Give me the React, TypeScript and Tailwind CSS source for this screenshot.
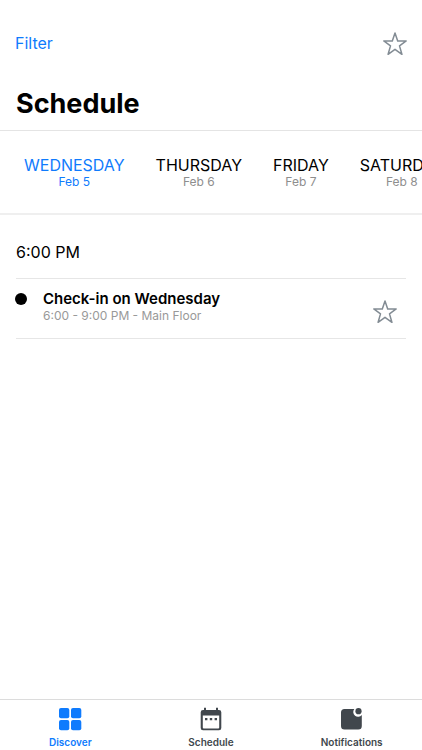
import { useState } from "react";

const days = [
  { name: "WEDNESDAY", date: "Feb 5" },
  { name: "THURSDAY", date: "Feb 6" },
  { name: "FRIDAY", date: "Feb 7" },
  { name: "SATURDAY", date: "Feb 8" },
];

function Star() {
  return (
    <svg viewBox="0 0 24 24" className="size-6" fill="none" stroke="#838c94" strokeWidth="1.5" strokeLinejoin="round" aria-hidden="true">
      <path d="M12 .9 14.700 8.900H23.200L16.500 13.900 18.900 22.300 12 17.300 5.100 22.300 7.500 13.900 .8 8.900H9.300Z" />
    </svg>
  );
}

function DiscoverIcon() {
  return (
    <svg viewBox="0 0 24 24" className="size-6" fill="currentColor" aria-hidden="true">
      <rect x="1" y="1" width="10.300" height="10.300" rx="2" />
      <rect x="13" y="1" width="10.300" height="10.300" rx="2" />
      <rect x="1" y="13" width="10.300" height="10.300" rx="2" />
      <rect x="13" y="13" width="10.300" height="10.300" rx="2" />
    </svg>
  );
}

function CalendarIcon() {
  return (
    <svg viewBox="0 0 24 24" className="size-6" fill="#41474d" aria-hidden="true">
      <path
        fillRule="evenodd"
        d="M5 .8h2v2.200h10V.8h2V3h1a2.300 2.300 0 0 1 2.300 2.300v15.700A2.300 2.300 0 0 1 20 23.300H4a2.300 2.300 0 0 1-2.300-2.300V5.300A2.300 2.300 0 0 1 4 3h1ZM3.800 8.400v12a1 1 0 0 0 1 1h14.400a1 1 0 0 0 1-1v-12Z"
      />
      <path d="M6 10.900h2.400v2.400H6zM10.800 10.900h2.400v2.400h-2.400zM15.600 10.900H18v2.400h-2.400z" />
    </svg>
  );
}

function NotificationIcon() {
  return (
    <svg viewBox="0 0 24 24" className="size-6" fill="#41474d" aria-hidden="true">
      <path d="M4.500 2h9.800A4.700 4.700 0 0 0 21.800 8v11a3.500 3.500 0 0 1-3.500 3.500H4.500A3.500 3.500 0 0 1 1 19V5.500A3.500 3.500 0 0 1 4.500 2Z" />
      <circle cx="18.500" cy="4.200" r="3.100" />
    </svg>
  );
}

const tabs = [
  { label: "Discover", Icon: DiscoverIcon },
  { label: "Schedule", Icon: CalendarIcon },
  { label: "Notifications", Icon: NotificationIcon },
];

export default function App() {
  const [day, setDay] = useState(0);
  const [tab, setTab] = useState(0);

  return (
    <div className="flex h-screen flex-col bg-white font-['Inter',sans-serif] text-black">
      <header className="border-b border-[#e4e4e4] pt-7 pb-[7px]">
        <div className="flex items-start justify-between px-[15px]">
          <button className="text-base leading-[30px] text-[#0f7bfd]">Filter</button>
          <button aria-label="Show favorites" className="flex h-8 items-center">
            <Star />
          </button>
        </div>
        <h1 className="mt-[25px] px-4 text-[27px] leading-[38px] font-bold">Schedule</h1>
      </header>

      <div className="flex gap-[31px] overflow-x-auto border-b-2 border-[#efefef] px-6 pt-6 pb-6 [scrollbar-width:none]">
        {days.map((d, i) => (
          <button key={d.name} onClick={() => setDay(i)} className={i === day ? "shrink-0 text-[#0f7bfd]" : "shrink-0"}>
            <span className="block text-base leading-5">{d.name}</span>
            <span className={i === day ? "block text-xs leading-[14px]" : "block text-xs leading-[14px] text-[#8e8e8e]"}>{d.date}</span>
          </button>
        ))}
      </div>

      <main className="flex-1 px-4 pt-6">
        <h2 className="h-[39px] text-base leading-[27px]">6:00 PM</h2>
        <ul>
          <li className="flex border-y border-[#e6e6e6] pt-2.5 pb-[14px]">
            <span className="mt-1 -ml-px size-3 shrink-0 rounded-full bg-black" />
            <div className="ml-4 flex-1 pb-px">
              <p className="text-[15px] leading-[19px] font-semibold">Check-in on Wednesday</p>
              <p className="text-xs leading-[15px] text-[#999]">6:00 - 9:00 PM - Main Floor</p>
            </div>
            <button aria-label="Add to favorites" className="mr-[9px] flex items-end">
              <Star />
            </button>
          </li>
        </ul>
      </main>

      <nav className="grid grid-cols-3 border-t border-[#dcdcdc] pt-[7px] pb-0.5">
        {tabs.map(({ label, Icon }, i) => (
          <button
            key={label}
            onClick={() => setTab(i)}
            className={i === tab ? "flex flex-col items-center gap-[5px] text-[#0f7bfd]" : "flex flex-col items-center gap-[5px] text-[#41474d]"}
          >
            <Icon />
            <span className="text-[10px] leading-3 font-semibold">{label}</span>
          </button>
        ))}
      </nav>
    </div>
  );
}
